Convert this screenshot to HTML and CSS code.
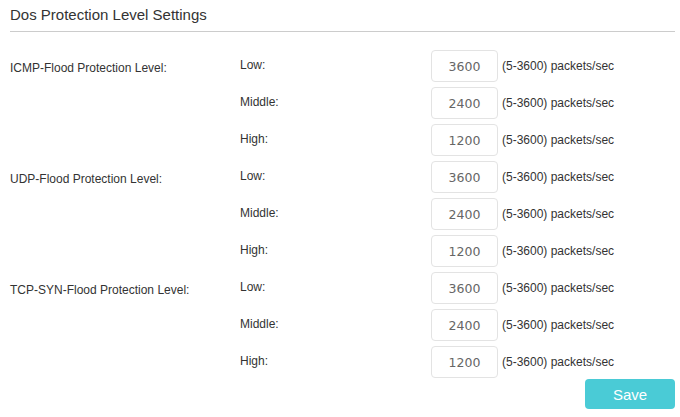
FILE: index.html
```html
<!DOCTYPE html>
<html lang="en">

<head>
    <meta charset="UTF-8">
    <meta name="viewport" content="width=device-width, initial-scale=1.0">
    <title>Dos Protection</title>
    <link rel="stylesheet" href="styles.css">
</head>

<body>
    <div class="container">
        <div class="head">
            <h2>Dos Protection Level Settings</h2>
        </div>
        <div class="levels">
            <div class="group">
                <p class="group-name">ICMP-Flood Protection Level:</p>
                <div class="rows">
                    <div class="row">
                        <p>Low:</p>
                        <input type="text" value="3600">
                        <span>(5-3600) packets/sec</span>
                    </div>
                    <div class="row">
                        <p>Middle:</p>
                        <input type="text" value="2400">
                        <span>(5-3600) packets/sec</span>
                    </div>
                    <div class="row">
                        <p>High:</p>
                        <input type="text" value="1200">
                        <span>(5-3600) packets/sec</span>
                    </div>
                </div>
            </div>
            <div class="group">
                <p class="group-name">UDP-Flood Protection Level:</p>
                <div class="rows">
                    <div class="row">
                        <p>Low:</p>
                        <input type="text" value="3600">
                        <span>(5-3600) packets/sec</span>
                    </div>
                    <div class="row">
                        <p>Middle:</p>
                        <input type="text" value="2400">
                        <span>(5-3600) packets/sec</span>
                    </div>
                    <div class="row">
                        <p>High:</p>
                        <input type="text" value="1200">
                        <span>(5-3600) packets/sec</span>
                    </div>
                </div>
            </div>
            <div class="group">
                <p class="group-name">TCP-SYN-Flood Protection Level:</p>
                <div class="rows">
                    <div class="row">
                        <p>Low:</p>
                        <input type="text" value="3600">
                        <span>(5-3600) packets/sec</span>
                    </div>
                    <div class="row">
                        <p>Middle:</p>
                        <input type="text" value="2400">
                        <span>(5-3600) packets/sec</span>
                    </div>
                    <div class="row">
                        <p>High:</p>
                        <input type="text" value="1200">
                        <span>(5-3600) packets/sec</span>
                    </div>
                </div>
            </div>
        </div>
        <div class="actions">
            <button class="save">Save</button>
        </div>
    </div>
</body>

</html>
```

FILE: styles.css
```css
* {
    margin: 0;
    padding: 0;
    box-sizing: border-box;
    font-family: 'Liberation Sans', Arial, sans-serif;
}

html,
body {
    background-color: #fff;
}

.container {
    padding: 0 5px 0 10px;
}

.head {
    padding: 5px 0 6px;
    border-bottom: 1px solid #ccc;
}

.head h2 {
    font-size: 15px;
    line-height: 20px;
    font-weight: normal;
    color: #333;
}

.levels {
    margin-top: 18px;
    display: flex;
    flex-direction: column;
    gap: 5px;
}

.group {
    display: flex;
}

.group-name {
    width: 230px;
    padding-top: 11px;
    font-size: 12px;
    line-height: 14px;
    color: #333;
}

.rows {
    display: flex;
    flex-direction: column;
    gap: 5px;
}

.row {
    display: flex;
    align-items: center;
    height: 32px;
    font-size: 12px;
    color: #333;
}

.row p {
    width: 191px;
    margin-top: -2px;
}

.row input {
    width: 67px;
    height: 32px;
    border: 1px solid #e3e3e3;
    border-radius: 4px;
    text-align: center;
    font-family: 'DejaVu Sans', Verdana, sans-serif;
    font-size: 12.5px;
    color: #666;
    outline: none;
}

.row span {
    margin-left: 4px;
}

.actions {
    display: flex;
    justify-content: flex-end;
    margin-top: 1px;
}

.save {
    width: 90px;
    height: 30px;
    border: none;
    border-radius: 4px;
    background-color: #4acbd6;
    color: #fff;
    font-size: 15px;
    cursor: pointer;
}
```
